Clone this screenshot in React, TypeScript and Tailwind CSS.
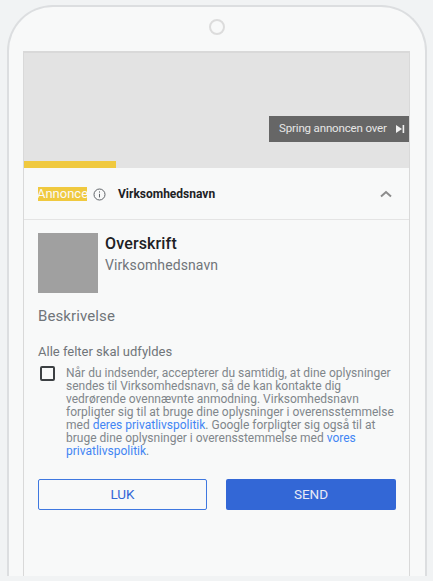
export default function App() {
  return (
    <div className="h-[581px] w-[433px] overflow-hidden bg-[#f1f3f4] pl-[7px] pt-[5px] font-['Roboto',sans-serif]">
      {/* Phone frame */}
      <div className="flex h-[571px] w-[420px] flex-col items-start rounded-t-[46px] border-2 border-b-0 border-[#dcdee0] bg-[#f8f9f9] pl-[14px]">
        <div className="mt-[12px] ml-[186px] h-4 w-4 rounded-full border-2 border-[#dcdcdc]" />
        <div className="mt-[16px] flex h-[525px] w-[387px] flex-col border-x border-t-2 border-[#d9d9d9]">
          {/* Video area */}
          <div className="relative h-[115px] shrink-0 bg-[#e3e3e3]">
            <div className="absolute right-0 top-[63px] flex h-[26px] w-[140px] items-center whitespace-nowrap bg-[#666666] pl-[10px] text-[11.5px] tracking-[-0.15px] text-[#e6e6e6]">
              Spring annoncen over
              <svg className="ml-[8px] h-[10px] w-[10px] shrink-0" viewBox="0 0 10 10" fill="#f1f1f1">
                <path d="M1 1l6 4-6 4z" />
                <rect x="7.6" y="1" width="1.6" height="8" />
              </svg>
            </div>
            <div className="absolute bottom-0 left-0 h-[7px] w-[92px] bg-[#f0c93f]" />
          </div>

          {/* Ad header */}
          <div className="flex h-[52px] shrink-0 items-center border-b border-[#e4e4e4] pl-[14px] pr-[17px] pt-[1px]">
            <span className="flex h-[14px] w-[49px] items-center justify-center bg-[#f0c93f] text-[13px] text-[#fafafa]">Annonce</span>
            <svg className="ml-[6px] h-[13px] w-[13px]" viewBox="0 0 13 13" fill="none" stroke="#5f6368">
              <circle cx="6.5" cy="6.5" r="5.5" />
              <path d="M6.5 5.8v3.6M6.5 3.4v1.2" />
            </svg>
            <span className="ml-[12px] text-[12px] font-bold text-[#202124]">Virksomhedsnavn</span>
            <svg className="ml-auto h-[8px] w-[12px]" viewBox="0 0 12 8" fill="none" stroke="#8c8c8c" strokeWidth="2">
              <path d="M1 6.5l5-4.5 5 4.5" />
            </svg>
          </div>

          {/* Ad content */}
          <div className="flex flex-col pl-[14px] pr-[13px] pt-[13px]">
            <div className="flex">
              <div className="h-[60px] w-[60px] bg-[#a0a0a0]" />
              <div className="ml-[7px] mt-[1px] flex flex-col">
                <span className="text-[16px] font-medium leading-[20px] tracking-[0.15px] text-[#202124]">Overskrift</span>
                <span className="mt-[1px] text-[14px] leading-[21px] tracking-[0.1px] text-[#70757a]">Virksomhedsnavn</span>
              </div>
            </div>
            <p className="mt-[13px] text-[15px] leading-[20px] tracking-[0.1px] text-[#70757a]">Beskrivelse</p>
            <p className="mt-[18px] text-[13px] leading-[16px] text-[#70757a]">Alle felter skal udfyldes</p>
            <div className="mt-[6px] flex">
              <div className="ml-[2px] h-[15px] w-[15px] shrink-0 rounded-[2px] border-2 border-[#3c4043]" />
              <p className="ml-[11px] pt-[1px] text-[12px] leading-[13px] text-[#80868b]">
                Når du indsender, accepterer du samtidig, at dine oplysninger sendes til Virksomhedsnavn, så de kan kontakte dig vedrørende ovennævnte anmodning. Virksomhedsnavn forpligter sig til at bruge dine oplysninger i overensstemmelse med{" "}
                <span className="text-[#4285f4]">deres privatlivspolitik</span>. Google forpligter sig også til at bruge dine oplysninger i overensstemmelse med{" "}
                <span className="text-[#4285f4]">vores privatlivspolitik</span>.
              </p>
            </div>
            <div className="mt-[21px] flex gap-[19px]">
              <button className="h-[31px] w-[169px] rounded-[2px] border border-[#3f78e0] text-[13.5px] text-[#3367d6]">LUK</button>
              <button className="h-[31px] w-[170px] rounded-[2px] bg-[#3367d6] text-[13.5px] text-[#e8eaf6]">SEND</button>
            </div>
          </div>
        </div>
      </div>
    </div>
  );
}
